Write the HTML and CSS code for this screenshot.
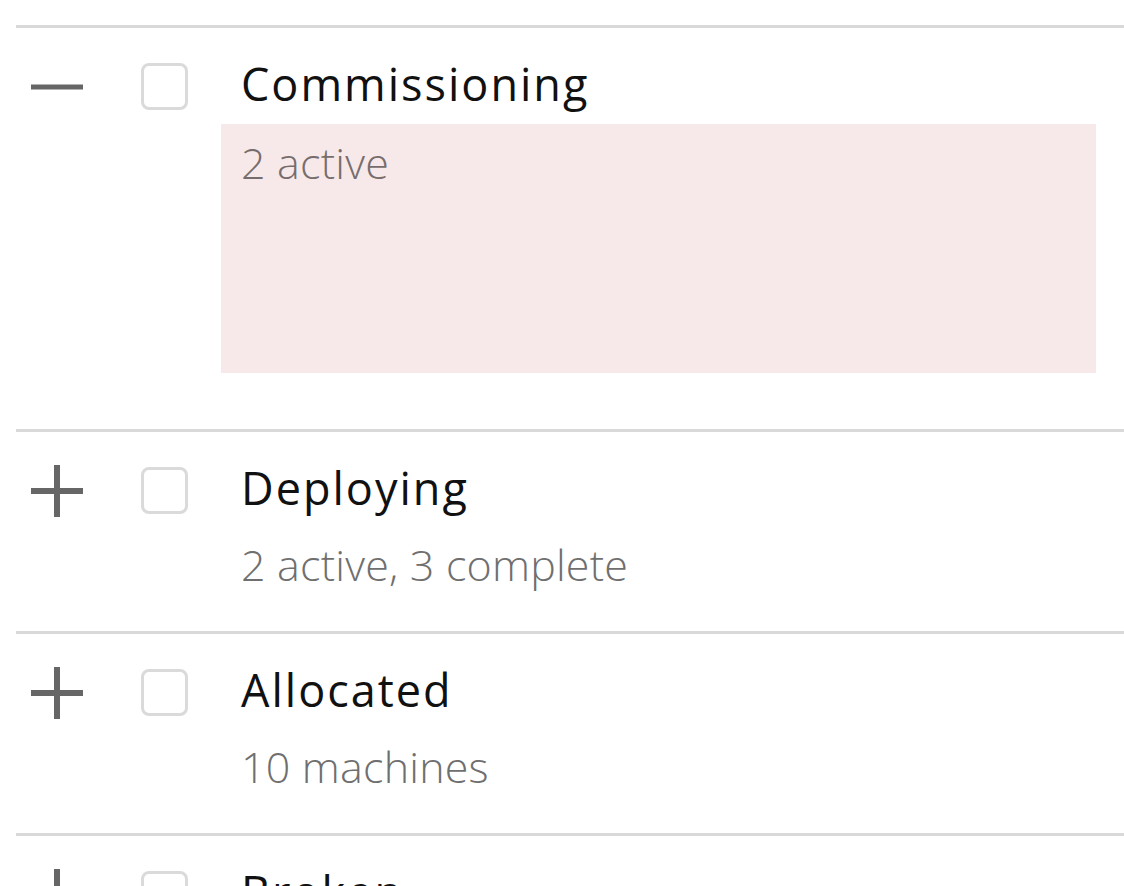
FILE: index.html
```html
<!DOCTYPE html>
<html lang="en">
<head>
<meta charset="utf-8">
<title>Machine groups</title>
<link rel="stylesheet" href="styles.css">
</head>
<body>
<div class="list">
  <div class="row row--expanded">
    <div class="toggle">
      <svg viewBox="0 0 52 52" width="52" height="52"><rect x="0" y="23.5" width="52" height="5" fill="#666"/></svg>
    </div>
    <div class="check"><span class="box"></span></div>
    <div class="content">
      <div class="title">Commissioning</div>
      <div class="panel"><div class="sub sub--panel">2 active</div></div>
    </div>
  </div>
  <div class="row">
    <div class="toggle">
      <svg viewBox="0 0 52 52" width="52" height="52"><rect x="0" y="23" width="52" height="6" fill="#666"/><rect x="23" y="0" width="6" height="52" fill="#666"/></svg>
    </div>
    <div class="check"><span class="box"></span></div>
    <div class="content">
      <div class="title">Deploying</div>
      <div class="sub">2 active, 3 complete</div>
    </div>
  </div>
  <div class="row">
    <div class="toggle">
      <svg viewBox="0 0 52 52" width="52" height="52"><rect x="0" y="23" width="52" height="6" fill="#666"/><rect x="23" y="0" width="6" height="52" fill="#666"/></svg>
    </div>
    <div class="check"><span class="box"></span></div>
    <div class="content">
      <div class="title">Allocated</div>
      <div class="sub">10 machines</div>
    </div>
  </div>
  <div class="row">
    <div class="toggle">
      <svg viewBox="0 0 52 52" width="52" height="52"><rect x="0" y="23" width="52" height="6" fill="#666"/><rect x="23" y="0" width="6" height="52" fill="#666"/></svg>
    </div>
    <div class="check"><span class="box"></span></div>
    <div class="content">
      <div class="title">Broken</div>
    </div>
  </div>
</div>
</body>
</html>
```

FILE: styles.css
```css
html, body {
  margin: 0;
  padding: 0;
  background: #fff;
  overflow: hidden;
}

body {
  font-family: "Open Sans", "Noto Sans", sans-serif;
  color: #111;
}

.list {
  padding-top: 25px;
  padding-left: 16px;
}

.row {
  display: grid;
  grid-template-columns: 125px 80px 875px;
  border-top: 3px solid #d9d9d9;
  padding-top: 26px;
  padding-bottom: 36px;
  padding-right: 28px;
}

.row--expanded {
  padding-bottom: 56px;
}

.toggle {
  padding-left: 15px;
  padding-top: 6.5px;
}

.toggle svg {
  display: block;
}

.check {
  padding-top: 9px;
}

.box {
  display: block;
  width: 47px;
  height: 47px;
  box-sizing: border-box;
  border: 3px solid #dadada;
  border-radius: 8px;
  background: #fff;
}

.title {
  padding-left: 20px;
  font-size: 45px;
  line-height: 60px;
  letter-spacing: 2px;
  font-weight: 400;
  color: #111;
  white-space: nowrap;
}

.sub {
  padding-left: 20px;
  margin-top: 17px;
  font-size: 43px;
  line-height: 60px;
  letter-spacing: 0.2px;
  font-weight: 300;
  color: #6f6f6f;
  white-space: nowrap;
}

.panel {
  margin-top: 10px;
  height: 249px;
  box-sizing: border-box;
  padding-top: 9px;
  background: #f7e9e9;
}

.sub--panel {
  margin-top: 0;
  color: #776d6d;
}
```
